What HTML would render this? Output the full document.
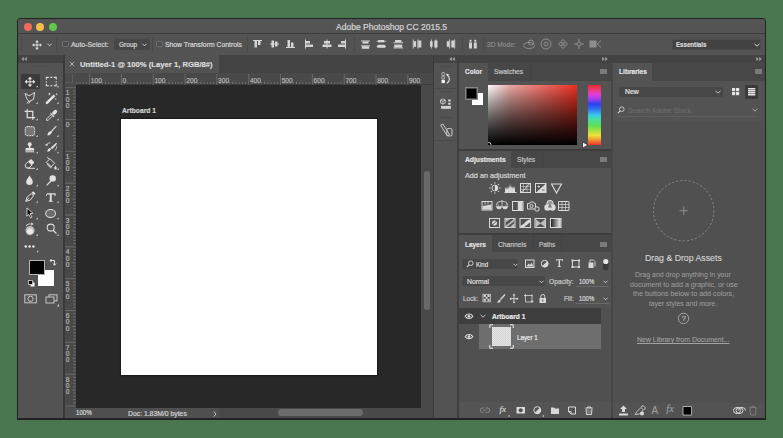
<!DOCTYPE html>
<html><head><meta charset="utf-8">
<style>
*{margin:0;padding:0;box-sizing:border-box}
html,body{width:783px;height:438px;overflow:hidden;background:#4a764f;font-family:"Liberation Sans",sans-serif;position:relative}
.a{position:absolute}
.t{position:absolute;white-space:nowrap;color:#d6d6d6;font-size:8px;line-height:1;transform-origin:0 0;-webkit-text-stroke-width:0.2px}
.rl{font-size:6.6px;color:#b4b4b4}
svg{overflow:visible}
</style></head><body>
<!-- window frame -->
<div class="a" style="left:17px;top:18px;width:749px;height:401.7px;background:#232323;border-radius:4px 4px 0 0"></div>
<div class="a" style="left:18px;top:19px;width:747px;height:399.3px;background:#535353;border-radius:3px 3px 0 0"></div>
<!-- title bar -->
<div class="a" style="left:18px;top:19px;width:747px;height:14px;background:#545454;border-radius:3px 3px 0 0"></div>
<div class="a" style="left:18px;top:33px;width:747px;height:1px;background:#3d3d3d"></div>
<div class="a" style="left:23.5px;top:23.2px;width:8px;height:8px;border-radius:50%;background:#f06b56"></div>
<div class="a" style="left:36.2px;top:23.2px;width:8px;height:8px;border-radius:50%;background:#f6bd45"></div>
<div class="a" style="left:48.9px;top:23.2px;width:8px;height:8px;border-radius:50%;background:#5ec84a"></div>
<!-- options bar -->
<div class="a" style="left:18px;top:34px;width:747px;height:20px;background:#535353"></div>

<div class="a" style="left:21px;top:37px;width:1px;height:15px;background:#4a4a4a"></div>
<svg class="a" style="left:32px;top:40px" width="10" height="10" viewBox="0 0 10 10"><g fill="#dedede"><rect x="4.5" y="1" width="1" height="8"/><rect x="1" y="4.5" width="8" height="1"/><path d="M5 0L6.8 2.2H3.2Z M5 10L6.8 7.8H3.2Z M0 5L2.2 3.2V6.8Z M10 5L7.8 3.2V6.8Z"/></g></svg>
<svg class="a" style="left:47px;top:43px" width="5" height="4" viewBox="0 0 5 4"><path d="M0.5 0.8L2.5 2.8L4.5 0.8" stroke="#cfcfcf" stroke-width="1" fill="none"/></svg>
<div class="a" style="left:56px;top:37px;width:1px;height:15px;background:#4a4a4a"></div>
<div class="a" style="left:61.5px;top:40.5px;width:7px;height:6.6px;border:1px solid #707070;border-radius:1.2px;background:#4d4d4d"></div>
<div class="a" style="left:113.5px;top:38.5px;width:36px;height:11px;background:#464646;border-radius:1px"></div>
<svg class="a" style="left:142px;top:43px" width="5" height="4" viewBox="0 0 5 4"><path d="M0.5 0.8L2.5 2.8L4.5 0.8" stroke="#cfcfcf" stroke-width="1" fill="none"/></svg>
<div class="a" style="left:152px;top:37px;width:1px;height:15px;background:#4a4a4a"></div>
<div class="a" style="left:155.5px;top:40.5px;width:7px;height:6.6px;border:1px solid #707070;border-radius:1.2px;background:#4d4d4d"></div>
<div class="a" style="left:247px;top:37px;width:1px;height:15px;background:#4a4a4a"></div>
<!-- align icons -->
<svg class="a" style="left:252px;top:39px" width="230" height="10" viewBox="0 0 230 10"><g fill="#d4d4d4">
<!-- align top -->
<rect x="1" y="1" width="9" height="1"/><rect x="2.5" y="2" width="2.5" height="6.5"/><rect x="6" y="2" width="2.5" height="4"/>
<!-- align vcenter -->
<rect x="18" y="4.5" width="9" height="1"/><rect x="19.5" y="1.5" width="2.5" height="7"/><rect x="23" y="2.5" width="2.5" height="5"/>
<!-- align bottom -->
<rect x="34" y="8" width="9" height="1"/><rect x="35.5" y="1" width="2.5" height="7"/><rect x="39" y="3.5" width="2.5" height="4.5"/>
<!-- align left -->
<rect x="53" y="0.5" width="1" height="9"/><rect x="54" y="2" width="4" height="2.5"/><rect x="54" y="5.5" width="7" height="2.5"/>
<!-- align hcenter -->
<rect x="74.5" y="0.5" width="1" height="9"/><rect x="72" y="2" width="6" height="2.5"/><rect x="70.5" y="5.5" width="9" height="2.5"/>
<!-- align right -->
<rect x="93" y="0.5" width="1" height="9"/><rect x="89" y="2" width="4" height="2.5"/><rect x="86" y="5.5" width="7" height="2.5"/>
<!-- distribute -->
<rect x="109" y="1.5" width="9" height=".9"/><rect x="110.5" y="2.4" width="6" height="2.2"/><rect x="109" y="6.3" width="9" height=".9"/><rect x="109.8" y="7.2" width="7.4" height="2.6"/>
<rect x="126.2" y="1" width="6" height="2.4"/><rect x="124.6" y="1.8" width="9.6" height=".8"/><rect x="125.4" y="5.8" width="7.8" height="3"/><rect x="124.6" y="7" width="9.6" height=".8"/>
<rect x="143" y="1" width="6.4" height="2.3"/><rect x="141.4" y="3.3" width="9.8" height=".9"/><rect x="142.2" y="5.6" width="8" height="2.9"/><rect x="141.4" y="8.5" width="9.8" height=".9"/>
<rect x="160.8" y=".5" width=".9" height="9"/><rect x="161.7" y="2.2" width="2.4" height="5.6"/><rect x="165.4" y=".5" width=".9" height="9"/><rect x="166.3" y="1.5" width="3" height="7"/>
<rect x="178" y="2.2" width="2.6" height="5.6"/><rect x="178.9" y=".5" width=".8" height="9"/><rect x="182.3" y="1.5" width="3.2" height="7"/><rect x="183.5" y=".5" width=".8" height="9"/>
<rect x="194.8" y="2.2" width="2.4" height="5.6"/><rect x="197.2" y=".5" width=".9" height="9"/><rect x="199.3" y="1.5" width="3" height="7"/><rect x="202.3" y=".5" width=".9" height="9"/>
<!-- auto align -->
<rect x="217" y="3.5" width="3" height="6"/><rect x="221.8" y="3.5" width="3" height="6"/><rect x="217.5" y=".8" width="2" height="2"/><rect x="222.3" y=".8" width="2" height="2"/>
</g></svg>
<div class="a" style="left:354px;top:37px;width:1px;height:15px;background:#4a4a4a"></div>
<div class="a" style="left:461.5px;top:37px;width:1px;height:15px;background:#4a4a4a"></div>
<div class="a" style="left:483px;top:37px;width:1px;height:15px;background:#4a4a4a"></div>
<svg class="a" style="left:522px;top:38px" width="82" height="12" viewBox="0 0 82 12"><g stroke="#8e8e8e" fill="none" stroke-width="1">
<ellipse cx="7" cy="7.5" rx="5.5" ry="3"/><circle cx="9" cy="4.5" r="2.5"/>
<circle cx="24" cy="6" r="5"/><circle cx="24" cy="6" r="2"/>
<path d="M41 1.5l2 2-2 2-2-2z M41 6.5l2 2-2 2-2-2z M38.5 4l2 2-2 2-2-2z M43.5 4l2 2-2 2-2-2z"/>
<circle cx="57" cy="6" r="2"/><path d="M52 6h3M59 6h3M57 1v3M57 8v3"/>
<rect x="68" y="3" width="6" height="6" fill="#8e8e8e"/><path d="M75 6l4-3.5M75 6l4 3.5"/>
</g></svg>
<div class="a" style="left:672px;top:39px;width:89px;height:10.5px;background:#424242;border:1px solid #4c4c4c;border-radius:1px"></div>
<svg class="a" style="left:754px;top:42.5px" width="6" height="4" viewBox="0 0 6 4"><path d="M0.5 0.8L3 3.2L5.5 0.8" stroke="#d0d0d0" stroke-width="1" fill="none"/></svg>
<!-- dock header row -->
<div class="a" style="left:18px;top:55.2px;width:747px;height:7.8px;background:#434343"></div>
<!-- left toolbar -->
<div class="a" style="left:18px;top:63px;width:45px;height:355.3px;background:#535353"></div>
<div class="a" style="left:63px;top:55px;width:2px;height:363.3px;background:#3a3a3a"></div>
<div class="a" style="left:34px;top:65.5px;width:13px;height:1px;background:#4c4c4c"></div>
<div class="a" style="left:20.5px;top:74px;width:19.5px;height:15px;background:#3b3b3b;border-radius:1px"></div>
<svg class="a" style="left:18px;top:63px" width="46" height="250" viewBox="0 0 46 250">
<g fill="#e6e6e6">
<path d="M19.8 24.2h-1.8l1.8-1.8z M40.6 24.2h-1.8l1.8-1.8z M19.8 40.8h-1.8l1.8-1.8z M40.6 40.8h-1.8l1.8-1.8z M19.8 57.3h-1.8l1.8-1.8z M40.6 57.3h-1.8l1.8-1.8z M19.8 73.8h-1.8l1.8-1.8z M40.6 73.8h-1.8l1.8-1.8z M19.8 90.3h-1.8l1.8-1.8z M40.6 90.3h-1.8l1.8-1.8z M19.8 106.8h-1.8l1.8-1.8z M40.6 106.8h-1.8l1.8-1.8z M19.8 123.3h-1.8l1.8-1.8z M40.6 123.3h-1.8l1.8-1.8z M19.8 139.8h-1.8l1.8-1.8z M40.6 139.8h-1.8l1.8-1.8z M19.8 156.3h-1.8l1.8-1.8z M40.6 156.3h-1.8l1.8-1.8z M19.8 172.8h-1.8l1.8-1.8z M40.6 172.8h-1.8l1.8-1.8z M20.2 189.2h-1.8l1.8-1.8z M40.8 243.5h-1.8l1.8-1.8z"/>
<!-- move -->
<rect x="11.5" y="15.5" width="1" height="6.5"/><rect x="8.3" y="18.3" width="7.5" height="1"/>
<path d="M12 13.8l2.3 2.4h-4.6z M12 23.9l2.3-2.4h-4.6z M6.7 18.8l2.4-2.3v4.6z M17.3 18.8l-2.4-2.3v4.6z"/>
<!-- dots -->
<circle cx="7.8" cy="183.6" r="1.25"/><circle cx="11.6" cy="183.6" r="1.25"/><circle cx="15.4" cy="183.6" r="1.25"/>
</g>
<g fill="none" stroke="#dedede" stroke-width="1">
<!-- marquee -->
<path d="M28.4 16.4v-2h2.4 M35.8 14.4h2.4v2 M38.2 20.8v2h-2.4 M30.8 22.8h-2.4v-2 M32.3 14.4h2 M32.3 22.8h2 M28.4 18.2v1.4 M38.2 18.2v1.4" stroke-width="1.1"/>
<!-- lasso -->
<path d="M7.2 30.3l3.9 2.6 5.6-3.4-1.2 6.8-4.3 2.2c-1.6-.9-3.2-3.6-4-8.2z M11.2 37.9l-2.6 2.6 M12.4 38.2l-1.8 2.3" stroke-width=".95"/>
<!-- crop -->
<path d="M9.2 46.2v8.3h8 M6.6 48.3h8.2v8.4" stroke-width="1.25"/>
<!-- eyedropper -->
<path d="M28.8 55.8l5.4-5.4 1.4 1.4-5.4 5.4-1.6.3z" stroke-width=".9"/>
<!-- healing -->
<rect x="7.2" y="63.6" width="9.4" height="9" rx="2.2" fill="#767676" stroke-dasharray="1.1 .6" stroke-width="1.1"/>
<!-- brush -->
<path d="M38.3 63.2l-5 5.3" stroke-width="1.1"/>
<!-- history arc -->
<path d="M27.8 82.6c.8-1.8 2.5-2.8 4.6-2.8 M36.8 87.5c1.4-1 2-2.6 1.8-4.2" stroke-width=".8"/>
<!-- eraser outline -->
<path d="M7.1 101.8l3.2-3.3 3.6 3.6-2.8 2.8h-3z M9.5 105.3h7.5" stroke-width="1"/>
<!-- bucket -->
<path d="M28.2 99.5l3.8-3.8 4.6 4.6-3.8 3.8z M31 96.2l-1.4-1.6 .8-.8" stroke-width="1"/>
<!-- zoom -->
<circle cx="32.7" cy="164.6" r="3.5" stroke-width="1.05"/><path d="M35.2 167.2l3.3 3.4" stroke-width="1.3"/>
<!-- ellipse -->
<ellipse cx="32.6" cy="150.5" rx="4.9" ry="4" fill="#6c6c6c" stroke-width="1.05"/>
<!-- pen -->
<path d="M7.8 138.3l1.3-4.3 4.2-3.4 2.3 2.3-3.4 4.2z M7.8 138.3l3.2-3.2" stroke-width="1"/>
</g>
<g fill="#e2e2e2">
<!-- wand -->
<path d="M28 39l7.6-7.6 1.8 1.8-7.6 7.6c-.6 .5-1.3 .5-1.8 0s-.5-1.3 0-1.8z"/>
<path d="M31.4 29.5l.4 1.1 1.1.4-1.1.4-.4 1.1-.4-1.1-1.1-.4 1.1-.4z M38.6 29.7l.35 1 1 .35-1 .35-.35 1-.35-1-1-.35 1-.35z M37.8 34.8l.3 .8.8 .3-.8.3-.3 .8-.3-.8-.8-.3.8-.3z"/>
<!-- eyedropper bulb -->
<path d="M34 49.6l2.3-2.3c.7-.7 1.8-.7 2.4 0s.7 1.7 0 2.4l-2.3 2.3z"/><path d="M32.9 49.9l3.6 3.6-.8.8-3.6-3.6z"/>
<!-- brush tip -->
<path d="M32.9 68c-1.7 .2-3.3 1.8-3.6 4.6 2.8-.2 4.4-1.9 4.6-3.6z"/>
<!-- stamp -->
<circle cx="11.7" cy="81.2" r="2"/><rect x="10.9" y="82.5" width="1.6" height="2.6"/><path d="M7.5 86.2c0-.7.5-1.2 1.2-1.2h6.2c.7 0 1.2.5 1.2 1.2v1.3h-8.6z"/><rect x="7.5" y="87.6" width="8.6" height="1.4" opacity=".7"/><rect x="7.5" y="89" width="8.6" height=".8" opacity=".4"/>
<!-- history brush -->
<path d="M38.2 79.8l.9.9-4.9 5.5-1.5-1.5z M32.1 85.1c-1.4 .2-2.5 1.3-2.8 3.6 2.2-.2 3.4-1.3 3.6-2.8z M27.2 81.5l2.6-.7-.6 2.4z"/>
<!-- eraser fill -->
<path d="M10.3 98.5l1.9-1.9c.4-.4 1-.4 1.4 0l2.2 2.2c.4 .4 .4 1 0 1.4l-1.9 1.9z"/>
<!-- bucket drop -->
<path d="M37.5 102.8c-.6 1-1.3 1.7-1.3 2.4a1.3 1.3 0 0 0 2.6 0c0-.7-.7-1.4-1.3-2.4z"/><path d="M29.8 99.5l4.6 4.6-1.6 1.6-3.8-3.8z" opacity=".5"/>
<!-- drop -->
<path d="M11.5 112.4c-1.4 2.4-3.3 4.3-3.3 6.3a3.3 3.3 0 0 0 6.6 0c0-2-1.9-3.9-3.3-6.3z"/>
<!-- dodge -->
<circle cx="34.7" cy="115.4" r="3.2"/><path d="M32.6 117.6l-4.4 4.5.7.7 4.5-4.4z"/>
<!-- pen cap -->
<path d="M13.6 129.8l1.6-1.6 2.4 2.4-1.6 1.6z"/>
<!-- type -->
<path d="M28.9 130.3h8.7v2.6h-.8l-.5-1.5h-2.6v6.2l1.1.5v.6h-4.1v-.6l1.1-.5v-6.2h-2.6l-.5 1.5h-.8z"/>
<!-- hand / rotate -->
<path d="M7.5 167.6c0-2.6 2-4.6 4.5-4.6s4.6 2 4.6 4.6-2.1 4.6-4.6 4.6-4.5-2-4.5-4.6z" fill="#bdbdbd"/><path d="M9 168.5c0-1.7 1.3-3 3-3s3 1.3 3 3-1.3 2.7-3 2.7-3-1-3-2.7z" fill="#e8e8e8"/>
<path d="M8 162.8c1.3-1.4 3-2.1 4.8-1.8" fill="none" stroke="#e2e2e2" stroke-width="1"/><path d="M13.2 159.5l2.6 1.6-2.6 1.5z"/>
</g>
<!-- path select -->
<path d="M9 144.9l5.9 5.4-2.9.4 2 3.3-1.4.8-1.9-3.4-1.8 1.8z" fill="#0c0c0c" stroke="#e8e8e8" stroke-width=".85"/>
</svg>
<!-- swatches -->
<div class="a" style="left:38.4px;top:270px;width:16px;height:15.7px;background:#ffffff"></div>
<div class="a" style="left:28.8px;top:259.7px;width:16.2px;height:15.3px;background:#000;border:1px solid #b4b4b4"></div>
<svg class="a" style="left:48.5px;top:258.5px" width="8" height="8" viewBox="0 0 8 8"><path d="M1 1.5h4.5v4.5 M4 4.5l1.5 1.8 1.5-1.8 M2.5 0l-1.5 1.5 1.5 1.5" stroke="#dedede" stroke-width="1" fill="none"/></svg>
<svg class="a" style="left:28px;top:280px" width="7" height="7" viewBox="0 0 7 7"><rect x="2.5" y="2.5" width="4" height="4" fill="#fff"/><rect x=".5" y=".5" width="4" height="4" fill="#000" stroke="#d0d0d0" stroke-width=".8"/></svg>
<svg class="a" style="left:23.5px;top:294px" width="14" height="10" viewBox="0 0 14 10"><rect x=".8" y=".8" width="11.5" height="8" fill="none" stroke="#c8c8c8" stroke-width="1"/><circle cx="6.5" cy="4.8" r="2.6" fill="none" stroke="#c8c8c8" stroke-width="1"/></svg>
<svg class="a" style="left:45px;top:293.5px" width="15" height="13" viewBox="0 0 15 13"><g fill="none" stroke="#c8c8c8" stroke-width="1"><rect x="4" y=".8" width="8" height="6"/><rect x="1" y="3" width="8" height="6" fill="#535353"/></g><path d="M13.8 11.5h-1.5l1.5-1.5z" fill="#e0e0e0"/></svg>
<!-- doc tab bar -->
<div class="a" style="left:65px;top:55px;width:368px;height:18px;background:#434343"></div>
<div class="a" style="left:65px;top:55px;width:154px;height:18px;background:#535353"></div>
<svg class="a" style="left:69px;top:61px" width="6" height="6" viewBox="0 0 6 6"><path d="M.8 .8l4.4 4.4M5.2 .8L.8 5.2" stroke="#bdbdbd" stroke-width=".9"/></svg>
<!-- ruler -->
<div class="a" style="left:65px;top:73px;width:368px;height:12px;background:#494949"></div>
<div class="a" style="left:65px;top:84px;width:368px;height:1px;background:#3c3c3c"></div>
<div class="a" style="left:65px;top:85px;width:11px;height:323px;background:#494949"></div>
<div class="a" style="left:65px;top:73px;width:11px;height:12px;background:#4b4b4b"></div><div class="a" style="left:72px;top:73.7px;width:.8px;height:8.6px;background:#5a5a5a"></div><div class="a" style="left:65px;top:81.6px;width:7.8px;height:.8px;background:#5a5a5a"></div>
<svg class="a" style="left:76px;top:73px" width="357" height="12" viewBox="0 0 357 12"><rect x="0.34" y="9.3" width="1" height="1.5" fill="#767676"/><rect x="3.52" y="9.3" width="1" height="1.5" fill="#767676"/><rect x="6.70" y="9.3" width="1" height="1.5" fill="#767676"/><rect x="9.89" y="9.3" width="1" height="1.5" fill="#767676"/><rect x="13.07" y="1" width="1" height="11" fill="#6a6a6a"/><rect x="16.25" y="9.3" width="1" height="1.5" fill="#767676"/><rect x="19.44" y="9.3" width="1" height="1.5" fill="#767676"/><rect x="22.62" y="9.3" width="1" height="1.5" fill="#767676"/><rect x="25.80" y="9.3" width="1" height="1.5" fill="#767676"/><rect x="28.99" y="8.6" width="1" height="2.4" fill="#747474"/><rect x="32.17" y="9.3" width="1" height="1.5" fill="#767676"/><rect x="35.35" y="9.3" width="1" height="1.5" fill="#767676"/><rect x="38.53" y="9.3" width="1" height="1.5" fill="#767676"/><rect x="41.72" y="9.3" width="1" height="1.5" fill="#767676"/><rect x="44.90" y="1" width="1" height="11" fill="#6a6a6a"/><rect x="48.08" y="9.3" width="1" height="1.5" fill="#767676"/><rect x="51.27" y="9.3" width="1" height="1.5" fill="#767676"/><rect x="54.45" y="9.3" width="1" height="1.5" fill="#767676"/><rect x="57.63" y="9.3" width="1" height="1.5" fill="#767676"/><rect x="60.81" y="8.6" width="1" height="2.4" fill="#747474"/><rect x="64.00" y="9.3" width="1" height="1.5" fill="#767676"/><rect x="67.18" y="9.3" width="1" height="1.5" fill="#767676"/><rect x="70.36" y="9.3" width="1" height="1.5" fill="#767676"/><rect x="73.55" y="9.3" width="1" height="1.5" fill="#767676"/><rect x="76.73" y="1" width="1" height="11" fill="#6a6a6a"/><rect x="79.91" y="9.3" width="1" height="1.5" fill="#767676"/><rect x="83.10" y="9.3" width="1" height="1.5" fill="#767676"/><rect x="86.28" y="9.3" width="1" height="1.5" fill="#767676"/><rect x="89.46" y="9.3" width="1" height="1.5" fill="#767676"/><rect x="92.65" y="8.6" width="1" height="2.4" fill="#747474"/><rect x="95.83" y="9.3" width="1" height="1.5" fill="#767676"/><rect x="99.01" y="9.3" width="1" height="1.5" fill="#767676"/><rect x="102.19" y="9.3" width="1" height="1.5" fill="#767676"/><rect x="105.38" y="9.3" width="1" height="1.5" fill="#767676"/><rect x="108.56" y="1" width="1" height="11" fill="#6a6a6a"/><rect x="111.74" y="9.3" width="1" height="1.5" fill="#767676"/><rect x="114.93" y="9.3" width="1" height="1.5" fill="#767676"/><rect x="118.11" y="9.3" width="1" height="1.5" fill="#767676"/><rect x="121.29" y="9.3" width="1" height="1.5" fill="#767676"/><rect x="124.48" y="8.6" width="1" height="2.4" fill="#747474"/><rect x="127.66" y="9.3" width="1" height="1.5" fill="#767676"/><rect x="130.84" y="9.3" width="1" height="1.5" fill="#767676"/><rect x="134.02" y="9.3" width="1" height="1.5" fill="#767676"/><rect x="137.21" y="9.3" width="1" height="1.5" fill="#767676"/><rect x="140.39" y="1" width="1" height="11" fill="#6a6a6a"/><rect x="143.57" y="9.3" width="1" height="1.5" fill="#767676"/><rect x="146.76" y="9.3" width="1" height="1.5" fill="#767676"/><rect x="149.94" y="9.3" width="1" height="1.5" fill="#767676"/><rect x="153.12" y="9.3" width="1" height="1.5" fill="#767676"/><rect x="156.31" y="8.6" width="1" height="2.4" fill="#747474"/><rect x="159.49" y="9.3" width="1" height="1.5" fill="#767676"/><rect x="162.67" y="9.3" width="1" height="1.5" fill="#767676"/><rect x="165.85" y="9.3" width="1" height="1.5" fill="#767676"/><rect x="169.04" y="9.3" width="1" height="1.5" fill="#767676"/><rect x="172.22" y="1" width="1" height="11" fill="#6a6a6a"/><rect x="175.40" y="9.3" width="1" height="1.5" fill="#767676"/><rect x="178.59" y="9.3" width="1" height="1.5" fill="#767676"/><rect x="181.77" y="9.3" width="1" height="1.5" fill="#767676"/><rect x="184.95" y="9.3" width="1" height="1.5" fill="#767676"/><rect x="188.13" y="8.6" width="1" height="2.4" fill="#747474"/><rect x="191.32" y="9.3" width="1" height="1.5" fill="#767676"/><rect x="194.50" y="9.3" width="1" height="1.5" fill="#767676"/><rect x="197.68" y="9.3" width="1" height="1.5" fill="#767676"/><rect x="200.87" y="9.3" width="1" height="1.5" fill="#767676"/><rect x="204.05" y="1" width="1" height="11" fill="#6a6a6a"/><rect x="207.23" y="9.3" width="1" height="1.5" fill="#767676"/><rect x="210.42" y="9.3" width="1" height="1.5" fill="#767676"/><rect x="213.60" y="9.3" width="1" height="1.5" fill="#767676"/><rect x="216.78" y="9.3" width="1" height="1.5" fill="#767676"/><rect x="219.97" y="8.6" width="1" height="2.4" fill="#747474"/><rect x="223.15" y="9.3" width="1" height="1.5" fill="#767676"/><rect x="226.33" y="9.3" width="1" height="1.5" fill="#767676"/><rect x="229.51" y="9.3" width="1" height="1.5" fill="#767676"/><rect x="232.70" y="9.3" width="1" height="1.5" fill="#767676"/><rect x="235.88" y="1" width="1" height="11" fill="#6a6a6a"/><rect x="239.06" y="9.3" width="1" height="1.5" fill="#767676"/><rect x="242.25" y="9.3" width="1" height="1.5" fill="#767676"/><rect x="245.43" y="9.3" width="1" height="1.5" fill="#767676"/><rect x="248.61" y="9.3" width="1" height="1.5" fill="#767676"/><rect x="251.79" y="8.6" width="1" height="2.4" fill="#747474"/><rect x="254.98" y="9.3" width="1" height="1.5" fill="#767676"/><rect x="258.16" y="9.3" width="1" height="1.5" fill="#767676"/><rect x="261.34" y="9.3" width="1" height="1.5" fill="#767676"/><rect x="264.53" y="9.3" width="1" height="1.5" fill="#767676"/><rect x="267.71" y="1" width="1" height="11" fill="#6a6a6a"/><rect x="270.89" y="9.3" width="1" height="1.5" fill="#767676"/><rect x="274.08" y="9.3" width="1" height="1.5" fill="#767676"/><rect x="277.26" y="9.3" width="1" height="1.5" fill="#767676"/><rect x="280.44" y="9.3" width="1" height="1.5" fill="#767676"/><rect x="283.62" y="8.6" width="1" height="2.4" fill="#747474"/><rect x="286.81" y="9.3" width="1" height="1.5" fill="#767676"/><rect x="289.99" y="9.3" width="1" height="1.5" fill="#767676"/><rect x="293.17" y="9.3" width="1" height="1.5" fill="#767676"/><rect x="296.36" y="9.3" width="1" height="1.5" fill="#767676"/><rect x="299.54" y="1" width="1" height="11" fill="#6a6a6a"/><rect x="302.72" y="9.3" width="1" height="1.5" fill="#767676"/><rect x="305.91" y="9.3" width="1" height="1.5" fill="#767676"/><rect x="309.09" y="9.3" width="1" height="1.5" fill="#767676"/><rect x="312.27" y="9.3" width="1" height="1.5" fill="#767676"/><rect x="315.45" y="8.6" width="1" height="2.4" fill="#747474"/><rect x="318.64" y="9.3" width="1" height="1.5" fill="#767676"/><rect x="321.82" y="9.3" width="1" height="1.5" fill="#767676"/><rect x="325.00" y="9.3" width="1" height="1.5" fill="#767676"/><rect x="328.19" y="9.3" width="1" height="1.5" fill="#767676"/><rect x="331.37" y="1" width="1" height="11" fill="#6a6a6a"/><rect x="334.55" y="9.3" width="1" height="1.5" fill="#767676"/><rect x="337.74" y="9.3" width="1" height="1.5" fill="#767676"/><rect x="340.92" y="9.3" width="1" height="1.5" fill="#767676"/><rect x="344.10" y="9.3" width="1" height="1.5" fill="#767676"/></svg>
<div class="t rl" style="left:90.8px;top:78.2px">100</div>
<div class="t rl" style="left:122.6px;top:78.2px">0</div>
<div class="t rl" style="left:154.4px;top:78.2px">100</div>
<div class="t rl" style="left:186.3px;top:78.2px">200</div>
<div class="t rl" style="left:218.1px;top:78.2px">300</div>
<div class="t rl" style="left:249.9px;top:78.2px">400</div>
<div class="t rl" style="left:281.7px;top:78.2px">500</div>
<div class="t rl" style="left:313.6px;top:78.2px">600</div>
<div class="t rl" style="left:345.4px;top:78.2px">700</div>
<div class="t rl" style="left:377.2px;top:78.2px">800</div>
<div class="t rl" style="left:409.1px;top:78.2px">900</div>
<div class="a" style="left:65px;top:85px;width:11px;height:323px;overflow:hidden"><svg class="a" style="left:0;top:0" width="11" height="323" viewBox="0 0 11 323"><rect x="0" y="2.17" width="11" height="1" fill="#6a6a6a"/><rect x="8.5" y="5.35" width="2" height="1" fill="#767676"/><rect x="8.5" y="8.54" width="2" height="1" fill="#767676"/><rect x="8.5" y="11.72" width="2" height="1" fill="#767676"/><rect x="8.5" y="14.90" width="2" height="1" fill="#767676"/><rect x="7.5" y="18.09" width="3" height="1" fill="#767676"/><rect x="8.5" y="21.27" width="2" height="1" fill="#767676"/><rect x="8.5" y="24.45" width="2" height="1" fill="#767676"/><rect x="8.5" y="27.63" width="2" height="1" fill="#767676"/><rect x="8.5" y="30.82" width="2" height="1" fill="#767676"/><rect x="0" y="34.00" width="11" height="1" fill="#6a6a6a"/><rect x="8.5" y="37.18" width="2" height="1" fill="#767676"/><rect x="8.5" y="40.37" width="2" height="1" fill="#767676"/><rect x="8.5" y="43.55" width="2" height="1" fill="#767676"/><rect x="8.5" y="46.73" width="2" height="1" fill="#767676"/><rect x="7.5" y="49.91" width="3" height="1" fill="#767676"/><rect x="8.5" y="53.10" width="2" height="1" fill="#767676"/><rect x="8.5" y="56.28" width="2" height="1" fill="#767676"/><rect x="8.5" y="59.46" width="2" height="1" fill="#767676"/><rect x="8.5" y="62.65" width="2" height="1" fill="#767676"/><rect x="0" y="65.83" width="11" height="1" fill="#6a6a6a"/><rect x="8.5" y="69.01" width="2" height="1" fill="#767676"/><rect x="8.5" y="72.20" width="2" height="1" fill="#767676"/><rect x="8.5" y="75.38" width="2" height="1" fill="#767676"/><rect x="8.5" y="78.56" width="2" height="1" fill="#767676"/><rect x="7.5" y="81.75" width="3" height="1" fill="#767676"/><rect x="8.5" y="84.93" width="2" height="1" fill="#767676"/><rect x="8.5" y="88.11" width="2" height="1" fill="#767676"/><rect x="8.5" y="91.29" width="2" height="1" fill="#767676"/><rect x="8.5" y="94.48" width="2" height="1" fill="#767676"/><rect x="0" y="97.66" width="11" height="1" fill="#6a6a6a"/><rect x="8.5" y="100.84" width="2" height="1" fill="#767676"/><rect x="8.5" y="104.03" width="2" height="1" fill="#767676"/><rect x="8.5" y="107.21" width="2" height="1" fill="#767676"/><rect x="8.5" y="110.39" width="2" height="1" fill="#767676"/><rect x="7.5" y="113.57" width="3" height="1" fill="#767676"/><rect x="8.5" y="116.76" width="2" height="1" fill="#767676"/><rect x="8.5" y="119.94" width="2" height="1" fill="#767676"/><rect x="8.5" y="123.12" width="2" height="1" fill="#767676"/><rect x="8.5" y="126.31" width="2" height="1" fill="#767676"/><rect x="0" y="129.49" width="11" height="1" fill="#6a6a6a"/><rect x="8.5" y="132.67" width="2" height="1" fill="#767676"/><rect x="8.5" y="135.86" width="2" height="1" fill="#767676"/><rect x="8.5" y="139.04" width="2" height="1" fill="#767676"/><rect x="8.5" y="142.22" width="2" height="1" fill="#767676"/><rect x="7.5" y="145.41" width="3" height="1" fill="#767676"/><rect x="8.5" y="148.59" width="2" height="1" fill="#767676"/><rect x="8.5" y="151.77" width="2" height="1" fill="#767676"/><rect x="8.5" y="154.95" width="2" height="1" fill="#767676"/><rect x="8.5" y="158.14" width="2" height="1" fill="#767676"/><rect x="0" y="161.32" width="11" height="1" fill="#6a6a6a"/><rect x="8.5" y="164.50" width="2" height="1" fill="#767676"/><rect x="8.5" y="167.69" width="2" height="1" fill="#767676"/><rect x="8.5" y="170.87" width="2" height="1" fill="#767676"/><rect x="8.5" y="174.05" width="2" height="1" fill="#767676"/><rect x="7.5" y="177.24" width="3" height="1" fill="#767676"/><rect x="8.5" y="180.42" width="2" height="1" fill="#767676"/><rect x="8.5" y="183.60" width="2" height="1" fill="#767676"/><rect x="8.5" y="186.78" width="2" height="1" fill="#767676"/><rect x="8.5" y="189.97" width="2" height="1" fill="#767676"/><rect x="0" y="193.15" width="11" height="1" fill="#6a6a6a"/><rect x="8.5" y="196.33" width="2" height="1" fill="#767676"/><rect x="8.5" y="199.52" width="2" height="1" fill="#767676"/><rect x="8.5" y="202.70" width="2" height="1" fill="#767676"/><rect x="8.5" y="205.88" width="2" height="1" fill="#767676"/><rect x="7.5" y="209.06" width="3" height="1" fill="#767676"/><rect x="8.5" y="212.25" width="2" height="1" fill="#767676"/><rect x="8.5" y="215.43" width="2" height="1" fill="#767676"/><rect x="8.5" y="218.61" width="2" height="1" fill="#767676"/><rect x="8.5" y="221.80" width="2" height="1" fill="#767676"/><rect x="0" y="224.98" width="11" height="1" fill="#6a6a6a"/><rect x="8.5" y="228.16" width="2" height="1" fill="#767676"/><rect x="8.5" y="231.35" width="2" height="1" fill="#767676"/><rect x="8.5" y="234.53" width="2" height="1" fill="#767676"/><rect x="8.5" y="237.71" width="2" height="1" fill="#767676"/><rect x="7.5" y="240.89" width="3" height="1" fill="#767676"/><rect x="8.5" y="244.08" width="2" height="1" fill="#767676"/><rect x="8.5" y="247.26" width="2" height="1" fill="#767676"/><rect x="8.5" y="250.44" width="2" height="1" fill="#767676"/><rect x="8.5" y="253.63" width="2" height="1" fill="#767676"/><rect x="0" y="256.81" width="11" height="1" fill="#6a6a6a"/><rect x="8.5" y="259.99" width="2" height="1" fill="#767676"/><rect x="8.5" y="263.18" width="2" height="1" fill="#767676"/><rect x="8.5" y="266.36" width="2" height="1" fill="#767676"/><rect x="8.5" y="269.54" width="2" height="1" fill="#767676"/><rect x="7.5" y="272.73" width="3" height="1" fill="#767676"/><rect x="8.5" y="275.91" width="2" height="1" fill="#767676"/><rect x="8.5" y="279.09" width="2" height="1" fill="#767676"/><rect x="8.5" y="282.27" width="2" height="1" fill="#767676"/><rect x="8.5" y="285.46" width="2" height="1" fill="#767676"/><rect x="0" y="288.64" width="11" height="1" fill="#6a6a6a"/><rect x="8.5" y="291.82" width="2" height="1" fill="#767676"/><rect x="8.5" y="295.01" width="2" height="1" fill="#767676"/><rect x="8.5" y="298.19" width="2" height="1" fill="#767676"/><rect x="8.5" y="301.37" width="2" height="1" fill="#767676"/><rect x="7.5" y="304.55" width="3" height="1" fill="#767676"/><rect x="8.5" y="307.74" width="2" height="1" fill="#767676"/><rect x="8.5" y="310.92" width="2" height="1" fill="#767676"/><rect x="8.5" y="314.10" width="2" height="1" fill="#767676"/><rect x="8.5" y="317.29" width="2" height="1" fill="#767676"/><rect x="0" y="320.47" width="11" height="1" fill="#6a6a6a"/></svg><div class="t rl" style="left:0.8px;top:5.2px">1</div><div class="t rl" style="left:0.8px;top:11.5px">0</div><div class="t rl" style="left:0.8px;top:17.8px">0</div><div class="t rl" style="left:0.8px;top:37.0px">0</div><div class="t rl" style="left:0.8px;top:68.8px">1</div><div class="t rl" style="left:0.8px;top:75.1px">0</div><div class="t rl" style="left:0.8px;top:81.4px">0</div><div class="t rl" style="left:0.8px;top:100.7px">2</div><div class="t rl" style="left:0.8px;top:107.0px">0</div><div class="t rl" style="left:0.8px;top:113.3px">0</div><div class="t rl" style="left:0.8px;top:132.5px">3</div><div class="t rl" style="left:0.8px;top:138.8px">0</div><div class="t rl" style="left:0.8px;top:145.1px">0</div><div class="t rl" style="left:0.8px;top:164.3px">4</div><div class="t rl" style="left:0.8px;top:170.6px">0</div><div class="t rl" style="left:0.8px;top:176.9px">0</div><div class="t rl" style="left:0.8px;top:196.1px">5</div><div class="t rl" style="left:0.8px;top:202.4px">0</div><div class="t rl" style="left:0.8px;top:208.7px">0</div><div class="t rl" style="left:0.8px;top:228.0px">6</div><div class="t rl" style="left:0.8px;top:234.3px">0</div><div class="t rl" style="left:0.8px;top:240.6px">0</div><div class="t rl" style="left:0.8px;top:259.8px">7</div><div class="t rl" style="left:0.8px;top:266.1px">0</div><div class="t rl" style="left:0.8px;top:272.4px">0</div><div class="t rl" style="left:0.8px;top:291.6px">8</div><div class="t rl" style="left:0.8px;top:297.9px">0</div><div class="t rl" style="left:0.8px;top:304.2px">0</div><div class="t rl" style="left:0.8px;top:323.5px">9</div><div class="t rl" style="left:0.8px;top:329.8px">0</div><div class="t rl" style="left:0.8px;top:336.1px">0</div></div>

<!-- canvas -->
<div class="a" style="left:76px;top:85px;width:345px;height:323px;background:#282828"></div>
<div class="a" style="left:120.8px;top:118.9px;width:255.8px;height:255.7px;background:#ffffff;box-shadow:0 0 1px 1px rgba(0,0,0,.3)"></div>
<!-- v scroll -->
<div class="a" style="left:421px;top:85px;width:12px;height:323px;background:#494949"></div>
<div class="a" style="left:423.7px;top:171px;width:6.5px;height:138.5px;background:#696969;border-radius:3.25px"></div>
<!-- status -->
<div class="a" style="left:65px;top:408px;width:368px;height:10.3px;background:#494949"></div>
<div class="a" style="left:65px;top:408px;width:154px;height:10.3px;background:#4f4f4f"></div>
<svg class="a" style="left:213px;top:410.5px" width="4" height="6" viewBox="0 0 4 6"><path d="M.8 .5L3 3 .8 5.5" stroke="#cfcfcf" stroke-width=".9" fill="none"/></svg>
<div class="a" style="left:278.4px;top:409.4px;width:84.3px;height:6.9px;background:#6b6b6b;border-radius:3.5px"></div>
<div class="a" style="left:433px;top:55px;width:1px;height:363px;background:#393939"></div>
<!-- icon column -->
<div class="a" style="left:434px;top:63px;width:22.8px;height:355px;background:#494949"></div>
<div class="a" style="left:434px;top:63px;width:22.8px;height:24.7px;background:#535353"></div>
<div class="a" style="left:434px;top:88.5px;width:22.8px;height:25px;background:#535353"></div>
<div class="a" style="left:434px;top:114px;width:22.8px;height:25.6px;background:#535353"></div>
<div class="a" style="left:434px;top:140.5px;width:22.8px;height:277.5px;background:#535353"></div>
<div class="a" style="left:439.5px;top:65.7px;width:13px;height:1px;background:#4c4c4c"></div>
<div class="a" style="left:439.5px;top:91.3px;width:13px;height:1px;background:#4a4a4a"></div>
<div class="a" style="left:439.5px;top:116.8px;width:13px;height:1px;background:#4a4a4a"></div>
<svg class="a" style="left:438px;top:70px" width="18" height="68" viewBox="0 0 18 68">
<g fill="none" stroke="#cfcfcf" stroke-width=".8"><rect x="3.8" y="2.6" width="2.8" height="2.8" rx=".8"/><rect x="3.8" y="6.2" width="2.8" height="2.8" rx=".8"/></g>
<rect x="3.5" y="9.8" width="3.4" height="3.3" fill="#f0f0f0"/>
<path d="M9.4 5.2c2.6 1.8 2.9 5.6-.5 8" fill="none" stroke="#e0e0e0" stroke-width="1.1"/><path d="M8 3.4l3.2 1-2.1 2.1z" fill="#e8e8e8"/>
<path d="M4.9 28.8l2.4 1.3v2.8l-2.4 1.3-2.4-1.3v-2.8z M2.5 30.1l2.4 1.3 2.4-1.3 M4.9 31.4v2.7" fill="none" stroke="#d8d8d8" stroke-width=".8"/>
<rect x="10.3" y="29.5" width="2.3" height="2" fill="#e0e0e0"/><rect x="10.3" y="32.8" width="2.3" height="1.9" fill="#e0e0e0"/>
<rect x="3.3" y="36.2" width="9.4" height="2.4" fill="#cfcfcf" stroke="#e8e8e8" stroke-width=".5"/>
<path d="M2.6 55.2l2.3-1.2 6.6 10.4-2.3 1.3z" fill="none" stroke="#d8d8d8" stroke-width=".9"/>
<rect x="8.8" y="58.6" width="5.2" height="7.3" rx="1.2" fill="none" stroke="#d8d8d8" stroke-width=".9"/>
<path d="M3.5 56l2.5 5" stroke="#9a9a9a" stroke-width=".6"/>
</svg>
<div class="a" style="left:456.8px;top:63px;width:2.1px;height:355px;background:#3f3f3f"></div>
<div class="a" style="left:610.7px;top:63px;width:2.5px;height:355px;background:#474747"></div>
<div class="a" style="left:765px;top:55px;width:0px;height:0px"></div>
<!-- header arrows -->
<svg class="a" style="left:20.6px;top:56.8px" width="6" height="4" viewBox="0 0 6 4"><path d="M2.6 .3L.6 2l2 1.7z M5.6 .3L3.6 2l2 1.7z" fill="#a6a6a6" stroke="#a6a6a6" stroke-width=".4" stroke-linejoin="round"/></svg>
<svg class="a" style="left:449.3px;top:56.8px" width="6" height="4" viewBox="0 0 6 4"><path d="M2.6 .3L.6 2l2 1.7z M5.6 .3L3.6 2l2 1.7z" fill="#a6a6a6" stroke="#a6a6a6" stroke-width=".4" stroke-linejoin="round"/></svg>
<svg class="a" style="left:602.2px;top:56.8px" width="6" height="4" viewBox="0 0 6 4"><path d="M.4 .3L2.4 2l-2 1.7z M3.4 .3L5.4 2l-2 1.7z" fill="#a6a6a6" stroke="#a6a6a6" stroke-width=".4" stroke-linejoin="round"/></svg>
<svg class="a" style="left:756px;top:56.8px" width="6" height="4" viewBox="0 0 6 4"><path d="M.4 .3L2.4 2l-2 1.7z M3.4 .3L5.4 2l-2 1.7z" fill="#a6a6a6" stroke="#a6a6a6" stroke-width=".4" stroke-linejoin="round"/></svg>

<!-- ===== COLOR PANEL ===== -->
<div class="a" style="left:458.9px;top:63px;width:151.8px;height:86px;background:#535353"></div>
<div class="a" style="left:488px;top:63px;width:123.2px;height:17.8px;background:#474747"></div>
<div class="a" style="left:529.5px;top:63px;width:1px;height:17.8px;background:#424242"></div>
<div class="a" style="left:600.2px;top:69px;width:7px;height:5.3px;background:#7b7b7b"></div>
<div class="a" style="left:471.6px;top:93.4px;width:11.9px;height:12px;background:#fff"></div>
<div class="a" style="left:464.7px;top:86.5px;width:13.1px;height:13.2px;background:#000;border:1px solid #888;box-shadow:inset 0 0 0 1px #444"></div>
<div class="a" style="left:488.1px;top:84.8px;width:89.4px;height:60.1px;background:linear-gradient(to bottom,rgba(0,0,0,0) 0%,rgba(0,0,0,.3) 25%,rgba(0,0,0,.57) 50%,rgba(0,0,0,.8) 75%,#000 100%),linear-gradient(to right,#fff 0%,#e8a8a4 25%,#ee2f22 100%)"></div>
<div class="a" style="left:488.1px;top:138px;width:8px;height:6.9px;overflow:hidden"><svg class="a" style="left:-4px;top:2px" width="10" height="10" viewBox="0 0 10 10"><circle cx="4.5" cy="4.9" r="3.2" fill="none" stroke="#222" stroke-width=".7"/><circle cx="4.5" cy="4.9" r="2.5" fill="none" stroke="#f0f0f0" stroke-width=".8"/></svg></div>
<div class="a" style="left:588px;top:84.9px;width:12.8px;height:60px;background:linear-gradient(to bottom,#ec2c2c 0%,#ec3a80 9%,#e040d8 16%,#9a3cf0 24%,#2a40f0 32%,#3070f0 40%,#38c8e8 50%,#48e0a0 58%,#60e050 68%,#b8e040 78%,#f0e038 84%,#f09030 92%,#ec3030 100%)"></div>
<svg class="a" style="left:581px;top:140.5px" width="8" height="8" viewBox="0 0 8 8"><path d="M1.5 .8L7 4 1.5 7.2z" fill="#f0f0f0" stroke="#2a2a2a" stroke-width=".8"/></svg>
<div class="a" style="left:458.9px;top:149px;width:151.8px;height:1.5px;background:#3d3d3d"></div>

<!-- ===== ADJUSTMENTS ===== -->
<div class="a" style="left:458.9px;top:150.5px;width:151.8px;height:82.7px;background:#535353"></div>
<div class="a" style="left:511.4px;top:150.5px;width:99.8px;height:17.5px;background:#474747"></div>
<div class="a" style="left:541.8px;top:150.5px;width:1px;height:17.5px;background:#424242"></div>
<div class="a" style="left:600.2px;top:157px;width:7px;height:5.3px;background:#7b7b7b"></div>
<svg class="a" style="left:480px;top:182px" width="92" height="46" viewBox="0 0 92 46"><g fill="none" stroke="#dadada" stroke-width="1">
<!-- row1 -->
<circle cx="14.9" cy="6" r="2.9" stroke-width=".9"/><path d="M14.9 3.1a2.9 2.9 0 0 1 0 5.8z" fill="#e0e0e0" stroke="none"/><circle cx="19.90" cy="6.00" r=".7" fill="#d0d0d0" stroke="none"/><circle cx="18.44" cy="9.54" r=".7" fill="#d0d0d0" stroke="none"/><circle cx="14.90" cy="11.00" r=".7" fill="#d0d0d0" stroke="none"/><circle cx="11.36" cy="9.54" r=".7" fill="#d0d0d0" stroke="none"/><circle cx="9.90" cy="6.00" r=".7" fill="#d0d0d0" stroke="none"/><circle cx="11.36" cy="2.46" r=".7" fill="#d0d0d0" stroke="none"/><circle cx="14.90" cy="1.00" r=".7" fill="#d0d0d0" stroke="none"/><circle cx="18.44" cy="2.46" r=".7" fill="#d0d0d0" stroke="none"/>
<path d="M24.5 10.5h12" /><path d="M25 10V7l1-2 1 3 1-4 1 3 1-5 1 4 1-2 1 3 1-3 1 3v3z" fill="#dadada" stroke="none"/>
<rect x="40.5" y="1.5" width="10" height="9"/><path d="M43.5 1.5v9M47 1.5v9M40.5 4.5h10M40.5 7.5h10" stroke-width=".5"/><path d="M41 10c4-1 5-6 9-8.5" stroke-width="1"/>
<rect x="55.5" y="1.5" width="10.5" height="9"/><path d="M56 10.5L66 1.5 V10.5z" fill="#dadada" stroke="none"/><path d="M57.5 4.5h2.5M58.7 3.3v2.5" stroke-width=".8"/><path d="M62 8h2.5" stroke="#535353" stroke-width=".8"/>
<path d="M71.5 2h10l-5 9z" stroke-width="1.1"/>
<!-- row2 -->
<rect x="2" y="19.5" width="10" height="8.5"/><path d="M2.5 24L11.5 22.5v5h-9z" fill="#dadada" stroke="none"/><path d="M5 19.5v3M8 19.5v3" stroke-width=".8"/>
<path d="M22 19l-5 1.5M22 19l5 1.5 M22 18v7" stroke-width=".8"/><path d="M16.5 24.5a2.5 2.5 0 0 0 5 0z M22.5 24.5a2.5 2.5 0 0 0 5 0z" fill="#dadada" stroke-width=".6"/><path d="M17 21l-1 3.5M17 21l2 3.5M27 21l-1.5 3.5M27 21l1 3.5" stroke-width=".6"/>
<rect x="32.5" y="19.5" width="10.5" height="9"/><rect x="37.8" y="20" width="4.7" height="8" fill="#dadada" stroke="none"/><rect x="34.2" y="20" width="2" height="8" fill="#555" stroke="none"/>
<path d="M47.5 21.5h2l1-1.5h3l1 1.5h1v5.5h-8z" /><circle cx="51.5" cy="24" r="1.6"/><circle cx="57" cy="27" r="2.2" fill="#535353"/>
<circle cx="70" cy="21.5" r="3.2" fill="#9a9a9a"/><circle cx="67.5" cy="25.5" r="3.2" fill="#dadada" stroke="none"/><circle cx="72.5" cy="25.5" r="3.2" fill="#dadada" stroke="none"/><path d="M70 21.5l-2 4h4z" fill="#777" stroke="none"/>
<rect x="78.5" y="19.5" width="10.5" height="9" rx=".5"/><path d="M82 19.5v9M85.5 19.5v9M78.5 22.5h10.5M78.5 25.5h10.5" stroke-width=".7"/>
<!-- row3 -->
<rect x="9.5" y="36.5" width="10" height="9"/><circle cx="14.5" cy="41" r="2.5" fill="#dadada" stroke="none"/><path d="M11 44l7-6" stroke="#535353" stroke-width="1"/>
<rect x="25" y="36.5" width="10" height="9"/><path d="M25.5 44l9-7.5v2.5l-9 7z M25.5 40.5l5.5-4h-5.5z M34.5 41v4.5h-5z" fill="#bdbdbd" stroke="none"/>
<rect x="40" y="36.5" width="10.5" height="9"/><path d="M40.5 43.5c3-.5 4-3 6-4.5s3-1.5 4-1.5v3c-2 .5-3 2-5 3.5s-3 1-5 1z" fill="#dadada" stroke="none"/>
<rect x="55" y="36.5" width="10.5" height="9"/><path d="M55.5 37l5 4 5-4v8.5l-5-4-5 4z" fill="#bdbdbd" stroke="none"/>
<rect x="70.5" y="36.5" width="10.5" height="9"/><rect x="71" y="37" width="9.5" height="8" fill="url(#gm)" stroke="none"/>
</g><defs><linearGradient id="gm" x1="0" x2="1"><stop offset="0" stop-color="#222"/><stop offset="1" stop-color="#eee"/></linearGradient></defs></svg>
<div class="a" style="left:458.9px;top:233.2px;width:151.8px;height:2px;background:#3d3d3d"></div>

<!-- ===== LAYERS ===== -->
<div class="a" style="left:458.9px;top:235.2px;width:151.8px;height:183px;background:#535353"></div>
<div class="a" style="left:491.5px;top:235.2px;width:119.7px;height:17.2px;background:#474747"></div>
<div class="a" style="left:532.6px;top:235.2px;width:1px;height:17.2px;background:#424242"></div>
<div class="a" style="left:561.4px;top:235.2px;width:1px;height:17.2px;background:#424242"></div>
<div class="a" style="left:600.2px;top:241.5px;width:7px;height:5.3px;background:#7b7b7b"></div>
<!-- kind row -->
<div class="a" style="left:462px;top:258.9px;width:56px;height:10.3px;background:#474747;border-radius:1px"></div>
<svg class="a" style="left:466px;top:260px" width="8" height="8" viewBox="0 0 8 8"><circle cx="4.8" cy="3.2" r="2.3" fill="none" stroke="#d8d8d8" stroke-width=".9"/><path d="M3.2 4.8L.8 7.2" stroke="#d8d8d8" stroke-width="1.1"/></svg>
<svg class="a" style="left:512.5px;top:262.5px" width="5" height="4" viewBox="0 0 5 4"><path d="M.5 .8L2.5 2.8 4.5 .8" stroke="#cfcfcf" stroke-width=".9" fill="none"/></svg>
<svg class="a" style="left:524px;top:257px" width="88" height="14" viewBox="0 0 88 14"><g fill="none" stroke="#d8d8d8" stroke-width="1">
<rect x="1.5" y="3" width="8.5" height="7.5"/><path d="M2.5 9.5l2-3 1.5 1.5 1.5-2.5 2 4z" fill="#d8d8d8" stroke="none"/>
<circle cx="20.7" cy="6.7" r="3.4"/><path d="M20.7 3.3a3.4 3.4 0 0 1 0 6.8z" fill="#d8d8d8" stroke="none" transform="rotate(45 20.7 6.7)"/>
<path d="M32.3 2.3h6.6v2h-.6l-.4-1.1h-1.9v5.7l.9.4v.6h-3.2v-.6l.9-.4v-5.7h-1.9l-.4 1.1h-.6z" fill="#d8d8d8" stroke="none"/>
<rect x="48.5" y="3.5" width="6.5" height="6.5"/><rect x="47.5" y="2.5" width="2" height="2" fill="#d8d8d8" stroke="none"/><rect x="54" y="2.5" width="2" height="2" fill="#d8d8d8" stroke="none"/><rect x="47.5" y="9" width="2" height="2" fill="#d8d8d8" stroke="none"/><rect x="54" y="9" width="2" height="2" fill="#d8d8d8" stroke="none"/>
<path d="M64.5 5.5h5v5.5h-5z" fill="#d8d8d8" stroke="none"/><path d="M66 5.5v-2.5h3.5l1.5 1.5v5" stroke-width=".9"/>
</g><rect x="79" y="2.5" width="5.5" height="11" rx="2.75" fill="#3a3a3a"/><circle cx="81.75" cy="4.5" r="2.6" fill="#e8e8e8"/></svg>
<!-- blend row -->
<div class="a" style="left:462px;top:275.9px;width:83px;height:10.3px;background:#474747;border-radius:1px"></div>
<svg class="a" style="left:539px;top:279.5px" width="5" height="4" viewBox="0 0 5 4"><path d="M.5 .8L2.5 2.8 4.5 .8" stroke="#cfcfcf" stroke-width=".9" fill="none"/></svg>
<svg class="a" style="left:602.5px;top:279.5px" width="5" height="4" viewBox="0 0 5 4"><path d="M.5 .8L2.5 2.8 4.5 .8" stroke="#cfcfcf" stroke-width=".9" fill="none"/></svg>
<div class="a" style="left:575.8px;top:286px;width:33.6px;height:1px;background:#6a6a6a"></div>
<!-- lock row -->
<svg class="a" style="left:482px;top:293px" width="66" height="11" viewBox="0 0 66 11"><g fill="#d8d8d8">
<rect x="1" y="1.3" width="7.3" height="7.5" fill="none" stroke="#d8d8d8" stroke-width=".8"/><rect x="1.8" y="2" width="2" height="2"/><rect x="5.5" y="2" width="2" height="2"/><rect x="3.7" y="3.9" width="1.9" height="2"/><rect x="1.8" y="5.9" width="2" height="2"/><rect x="5.5" y="5.9" width="2" height="2"/>
<path d="M22.5 1l-4.5 5 1 1 4.5-5z M18 6.5c-1.5 .5-2.5 2-2.7 3.5 1.8 0 3-.8 3.6-2.5z"/>
<rect x="31.5" y="2" width=".9" height="7.5"/><rect x="28.2" y="5.3" width="7.5" height=".9"/><path d="M32 .6l1.5 1.8h-3z M32 10.6l1.5-1.8h-3z M27.5 5.75l1.8-1.5v3z M36.5 5.75l-1.8-1.5v3z"/>
<path d="M43.5 2.5h6.5v6.5h-6.5z" fill="none" stroke="#d8d8d8" stroke-width=".8"/><path d="M42 2.5h2M43.5 1v2M49.5 8.5h2M50 7v3M49 1.5l2 1.5" stroke="#d8d8d8" stroke-width=".8"/>
<path d="M57.5 5h6.5v5h-6.5z"/><path d="M58.8 5v-1.5a2 2 0 0 1 4 0v1.5" fill="none" stroke="#d8d8d8" stroke-width="1"/><rect x="60.3" y="6.5" width="1" height="2" fill="#535353"/>
</g></svg>
<svg class="a" style="left:602.5px;top:296.5px" width="5" height="4" viewBox="0 0 5 4"><path d="M.5 .8L2.5 2.8 4.5 .8" stroke="#cfcfcf" stroke-width=".9" fill="none"/></svg>
<div class="a" style="left:575.8px;top:302.8px;width:33.6px;height:1px;background:#6a6a6a"></div>
<!-- layer rows -->
<div class="a" style="left:458.9px;top:308.3px;width:151.8px;height:94px;background:#505050"></div>
<div class="a" style="left:458.9px;top:308.3px;width:141.7px;height:15.7px;background:#3e3e3e"></div>
<div class="a" style="left:479.1px;top:324px;width:122.1px;height:24.6px;background:#6e6e6e"></div>
<svg class="a" style="left:464px;top:313px" width="10" height="28" viewBox="0 0 10 28"><g fill="#e0e0e0"><path d="M.5 3.3C2 1.2 3.3.6 5 .6s3 .6 4.5 2.7C8 5.4 6.7 6 5 6S2 5.4.5 3.3z M1.7 3.3C2.8 4.6 3.8 5 5 5s2.2-.4 3.3-1.7C7.2 2 6.2 1.6 5 1.6S2.8 2 1.7 3.3z"/><circle cx="5" cy="3.3" r="1.3"/>
<path d="M.5 23.6C2 21.5 3.3 20.9 5 20.9s3 .6 4.5 2.7C8 25.7 6.7 26.3 5 26.3S2 25.7.5 23.6z M1.7 23.6C2.8 24.9 3.8 25.3 5 25.3s2.2-.4 3.3-1.7C7.2 22.3 6.2 21.9 5 21.9S2.8 22.3 1.7 23.6z"/><circle cx="5" cy="23.6" r="1.3"/></g></svg>
<svg class="a" style="left:480px;top:314px" width="6" height="4" viewBox="0 0 6 4"><path d="M.5 .8L3 3.2 5.5 .8" stroke="#c8c8c8" stroke-width=".9" fill="none"/></svg>
<div class="a" style="left:491.8px;top:326.5px;width:19.4px;height:19.4px;background:#e4e4e4;background-image:linear-gradient(45deg,#d4d4d4 25%,transparent 25%,transparent 75%,#d4d4d4 75%),linear-gradient(45deg,#d4d4d4 25%,transparent 25%,transparent 75%,#d4d4d4 75%);background-size:2px 2px;background-position:0 0,1px 1px"></div>
<svg class="a" style="left:489px;top:324px" width="25" height="25" viewBox="0 0 25 25"><path d="M.8 4V.8H4 M21 .8h3.2V4 M24.2 21v3.2H21 M4 24.2H.8V21" stroke="#f0f0f0" stroke-width="1" fill="none"/></svg>
<!-- layers bottom bar -->
<div class="a" style="left:458.9px;top:402.3px;width:151.8px;height:16px;background:#545454"></div>
<svg class="a" style="left:480px;top:404px" width="116" height="14" viewBox="0 0 116 14"><g fill="none" stroke="#d8d8d8" stroke-width="1">
<path d="M4 4h-1.5a2.2 2.2 0 0 0 0 4.4H4 M6 4h1.5a2.2 2.2 0 0 1 0 4.4H6 M3.5 6.2h3" stroke="#8a8a8a"/>
<rect x="36.5" y="3" width="8.5" height="6.5" fill="#d8d8d8" stroke="none"/><circle cx="40.7" cy="6.25" r="2" fill="#4f4f4f" stroke="none"/>
<circle cx="57.3" cy="6.2" r="3.5"/><path d="M57.3 2.7a3.5 3.5 0 0 1 0 7z" fill="#d8d8d8" stroke="none" transform="rotate(45 57.3 6.2)"/>
<path d="M71 3.5h3l1 1h4v5.5h-8z" fill="#d8d8d8" stroke="none"/>
<path d="M88.5 3h7v7h-4.5l-2.5-2.5z"/><path d="M88.5 7.5h2.5v2.5" />
<path d="M105.5 4h7M107.5 4v-1h3v1 M106 4.5l.5 6h5l.5-6" /><path d="M108 5.5v4M110 5.5v4" stroke-width=".6"/>
</g><g fill="#e8e8e8"><circle cx="29" cy="12" r=".7"/><circle cx="63.4" cy="12" r=".7"/></g></svg>
<div class="t ic" style="left:499.5px;top:405px;font-size:9px;font-style:italic;font-family:'Liberation Serif',serif;color:#d8d8d8">fx</div>

<!-- ===== LIBRARIES ===== -->
<div class="a" style="left:613.2px;top:63px;width:151.8px;height:355px;background:#535353"></div>
<div class="a" style="left:651.8px;top:63px;width:113.2px;height:17.5px;background:#474747"></div>
<div class="a" style="left:754.5px;top:69px;width:7px;height:5.3px;background:#7b7b7b"></div>
<div class="a" style="left:618.7px;top:86.8px;width:104.3px;height:9.9px;background:#474747;border-radius:1px"></div>
<svg class="a" style="left:715px;top:90px" width="6" height="4" viewBox="0 0 6 4"><path d="M.5 .8L3 3.2 5.5 .8" stroke="#cfcfcf" stroke-width=".9" fill="none"/></svg>
<svg class="a" style="left:732px;top:87.8px" width="8" height="8" viewBox="0 0 8 8"><g fill="#e4e4e4"><rect x="0" y="0" width="3.2" height="3.2"/><rect x="4" y="0" width="3.2" height="3.2"/><rect x="0" y="4" width="3.2" height="3.2"/><rect x="4" y="4" width="3.2" height="3.2"/></g></svg>
<div class="a" style="left:745px;top:85.3px;width:12.8px;height:13.5px;background:#3a3a3a;border-radius:1px"></div>
<svg class="a" style="left:747.9px;top:87.8px" width="8" height="8" viewBox="0 0 8 8"><g fill="#e4e4e4"><rect x="0" y="0" width="7.3" height="1.5"/><rect x="0" y="2" width="7.3" height="1.5"/><rect x="0" y="4" width="7.3" height="1.5"/><rect x="0" y="6" width="7.3" height="1.5"/></g></svg>
<svg class="a" style="left:617px;top:106px" width="8" height="8" viewBox="0 0 8 8"><circle cx="4.8" cy="3.2" r="2.3" fill="none" stroke="#d0d0d0" stroke-width=".9"/><path d="M3.2 4.8L.8 7.2" stroke="#d0d0d0" stroke-width="1.1"/></svg>
<svg class="a" style="left:752px;top:108px" width="6" height="4" viewBox="0 0 6 4"><path d="M.5 .8L3 3.2 5.5 .8" stroke="#b0b0b0" stroke-width=".9" fill="none"/></svg>
<div class="a" style="left:617px;top:116px;width:140px;height:1px;background:#5e5e5e"></div>
<div class="a" style="left:613.2px;top:120.5px;width:151.8px;height:282px;background:#505050"></div>
<svg class="a" style="left:650px;top:177px" width="68" height="68" viewBox="0 0 68 68"><circle cx="33.7" cy="33.7" r="30.2" fill="none" stroke="#8c8c8c" stroke-width=".9" stroke-dasharray="2.2 2"/><path d="M33.7 29.5v8.4M29.5 33.7h8.4" stroke="#8c8c8c" stroke-width="1.1"/></svg>
<svg class="a" style="left:677.1px;top:312.3px" width="13" height="13" viewBox="0 0 13 13"><circle cx="6.5" cy="6.5" r="5.2" fill="none" stroke="#b0b0b0" stroke-width=".85"/></svg>
<div class="t ic" style="left:681.4px;top:314.8px;font-size:8px;color:#b4b4b4">?</div>
<div class="a" style="left:613.2px;top:402.7px;width:151.8px;height:15.5px;background:#535353"></div>
<svg class="a" style="left:617px;top:404px" width="145" height="13" viewBox="0 0 145 13"><g fill="#dadada">
<path d="M6.5 1.5l3.5 3.5h-2v3h-3v-3h-2z M2 9.5h9v2h-9z"/>
<path d="M18 10.5l2-3 4-4 2.5 2.5-4 4z M24 3l2-1.5 2.5 2.5-1.5 2" fill="none" stroke="#dadada" stroke-width=".8"/><circle cx="25" cy="9.5" r="2"/>
<path d="M66 2.5h8.6v8.6h-8.6z" fill="#000" stroke="#bdbdbd" stroke-width=".9"/>
<path d="M119 6.5a3.5 3 0 1 1 7 0a3.5 3 0 1 1-7 0 M116.5 6.5a3.5 3 0 1 1 7 0a3.5 3 0 1 1-7 0 M121.5 6.5a3.5 3 0 1 1 7 0" fill="none" stroke="#dadada" stroke-width="1"/>
<path d="M132.5 3.5h7M134.5 3.5v-1h3v1 M133 4l.5 7h5l.5-7" fill="none" stroke="#7a7a7a" stroke-width="1"/>
</g></svg>
<div class="t ic" style="left:651.5px;top:405.5px;font-size:10px;color:#9a9a9a">A</div>
<div class="t ic" style="left:666.3px;top:404.3px;font-size:10.5px;font-style:italic;font-family:'Liberation Serif',serif;color:#9a9a9a">fx</div>
<div class="t" style="left:335.60px;top:23.80px;font-size:8.21px;font-weight:normal;color:#d4d4d4;transform:scaleX(1.041);">Adobe Photoshop CC 2015.5</div>
<div class="t" style="left:71.40px;top:41.26px;font-size:7.19px;font-weight:normal;color:#d8d8d8;transform:scaleX(0.960);">Auto-Select:</div>
<div class="t" style="left:118.80px;top:41.48px;font-size:7.05px;font-weight:normal;color:#d8d8d8;transform:scaleX(0.927);">Group</div>
<div class="t" style="left:164.80px;top:41.26px;font-size:7.19px;font-weight:normal;color:#d8d8d8;transform:scaleX(0.948);">Show Transform Controls</div>
<div class="t" style="left:487.20px;top:41.38px;font-size:7.05px;font-weight:normal;color:#8a8a8a;transform:scaleX(0.940);">3D Mode:</div>
<div class="t" style="left:676.40px;top:41.38px;font-size:7.05px;font-weight:bold;color:#dadada;transform:scaleX(0.872);">Essentials</div>
<div class="t" style="left:80.40px;top:61.44px;font-size:7.92px;font-weight:bold;color:#dcdcdc;transform:scaleX(0.969);">Untitled-1 @ 100% (Layer 1, RGB/8#)</div>
<div class="t" style="left:121.70px;top:107.83px;font-size:6.76px;font-weight:bold;color:#d0d0d0;transform:scaleX(0.998);">Artboard 1</div>
<div class="t" style="left:75.90px;top:410.25px;font-size:6.61px;font-weight:normal;color:#d6d6d6;transform:scaleX(0.934);">100%</div>
<div class="t" style="left:127.60px;top:411.10px;font-size:6.32px;font-weight:normal;color:#d0d0d0;transform:scaleX(1.081);">Doc: 1.83M/0 bytes</div>
<div class="t" style="left:464.90px;top:69.43px;font-size:6.76px;font-weight:bold;color:#e2e2e2;transform:scaleX(0.961);">Color</div>
<div class="t" style="left:493.70px;top:69.43px;font-size:6.76px;font-weight:normal;color:#c4c4c4;transform:scaleX(0.997);">Swatches</div>
<div class="t" style="left:465.10px;top:157.03px;font-size:6.76px;font-weight:bold;color:#e2e2e2;transform:scaleX(0.995);">Adjustments</div>
<div class="t" style="left:517.00px;top:157.03px;font-size:6.76px;font-weight:normal;color:#c4c4c4;transform:scaleX(0.989);">Styles</div>
<div class="t" style="left:464.70px;top:173.03px;font-size:6.76px;font-weight:normal;color:#d4d4d4;transform:scaleX(1.074);">Add an adjustment</div>
<div class="t" style="left:465.10px;top:241.71px;font-size:6.90px;font-weight:bold;color:#e2e2e2;transform:scaleX(0.934);">Layers</div>
<div class="t" style="left:497.90px;top:241.71px;font-size:6.90px;font-weight:normal;color:#c4c4c4;transform:scaleX(0.974);">Channels</div>
<div class="t" style="left:539.10px;top:241.71px;font-size:6.90px;font-weight:normal;color:#c4c4c4;transform:scaleX(0.919);">Paths</div>
<div class="t" style="left:475.50px;top:261.57px;font-size:6.47px;font-weight:normal;color:#dedede;transform:scaleX(0.930);">Kind</div>
<div class="t" style="left:466.50px;top:279.07px;font-size:6.47px;font-weight:normal;color:#dedede;transform:scaleX(1.061);">Normal</div>
<div class="t" style="left:549.10px;top:279.07px;font-size:6.47px;font-weight:normal;color:#c8c8c8;transform:scaleX(1.034);">Opacity:</div>
<div class="t" style="left:578.60px;top:279.07px;font-size:6.47px;font-weight:normal;color:#d8d8d8;transform:scaleX(0.918);">100%</div>
<div class="t" style="left:462.90px;top:296.17px;font-size:6.47px;font-weight:normal;color:#c4c4c4;transform:scaleX(0.979);">Lock:</div>
<div class="t" style="left:564.00px;top:296.17px;font-size:6.47px;font-weight:normal;color:#c4c4c4;transform:scaleX(0.957);">Fill:</div>
<div class="t" style="left:578.60px;top:296.17px;font-size:6.47px;font-weight:normal;color:#d8d8d8;transform:scaleX(0.918);">100%</div>
<div class="t" style="left:492.10px;top:313.75px;font-size:6.61px;font-weight:bold;color:#e6e6e6;transform:scaleX(0.999);">Artboard 1</div>
<div class="t" style="left:516.90px;top:335.05px;font-size:6.61px;font-weight:normal;color:#ececec;transform:scaleX(0.939);">Layer 1</div>
<div class="t" style="left:618.70px;top:69.31px;font-size:6.90px;font-weight:bold;color:#e2e2e2;transform:scaleX(0.960);">Libraries</div>
<div class="t" style="left:624.90px;top:89.23px;font-size:6.76px;font-weight:normal;color:#e0e0e0;transform:scaleX(1.020);">New</div>
<div class="t" style="left:627.50px;top:107.73px;font-size:6.76px;font-weight:normal;color:#6a6a6a;transform:scaleX(1.031);">Search Adobe Stock</div>
<div class="t" style="left:644.70px;top:254.08px;font-size:8.94px;font-weight:normal;color:#d8d8d8;transform:scaleX(0.980);-webkit-text-stroke-width:0.1px;">Drag &amp; Drop Assets</div>
<div class="t" style="left:635.10px;top:270.78px;font-size:7.05px;font-weight:normal;color:#9e9e9e;transform:scaleX(0.989);-webkit-text-stroke-width:0.05px;">Drag and drop anything in your</div>
<div class="t" style="left:629.70px;top:280.58px;font-size:7.05px;font-weight:normal;color:#9e9e9e;transform:scaleX(1.008);-webkit-text-stroke-width:0.05px;">document to add a graphic, or use</div>
<div class="t" style="left:633.00px;top:290.38px;font-size:7.05px;font-weight:normal;color:#9e9e9e;transform:scaleX(1.017);-webkit-text-stroke-width:0.05px;">the buttons below to add colors,</div>
<div class="t" style="left:649.20px;top:299.88px;font-size:7.05px;font-weight:normal;color:#9e9e9e;transform:scaleX(0.988);-webkit-text-stroke-width:0.05px;">layer styles and more.</div>
<div class="t" style="left:636.90px;top:337.43px;font-size:6.76px;font-weight:normal;color:#a2a2a2;transform:scaleX(1.031);text-decoration:underline;-webkit-text-stroke-width:0.1px;">New Library from Document...</div>

</body></html>
